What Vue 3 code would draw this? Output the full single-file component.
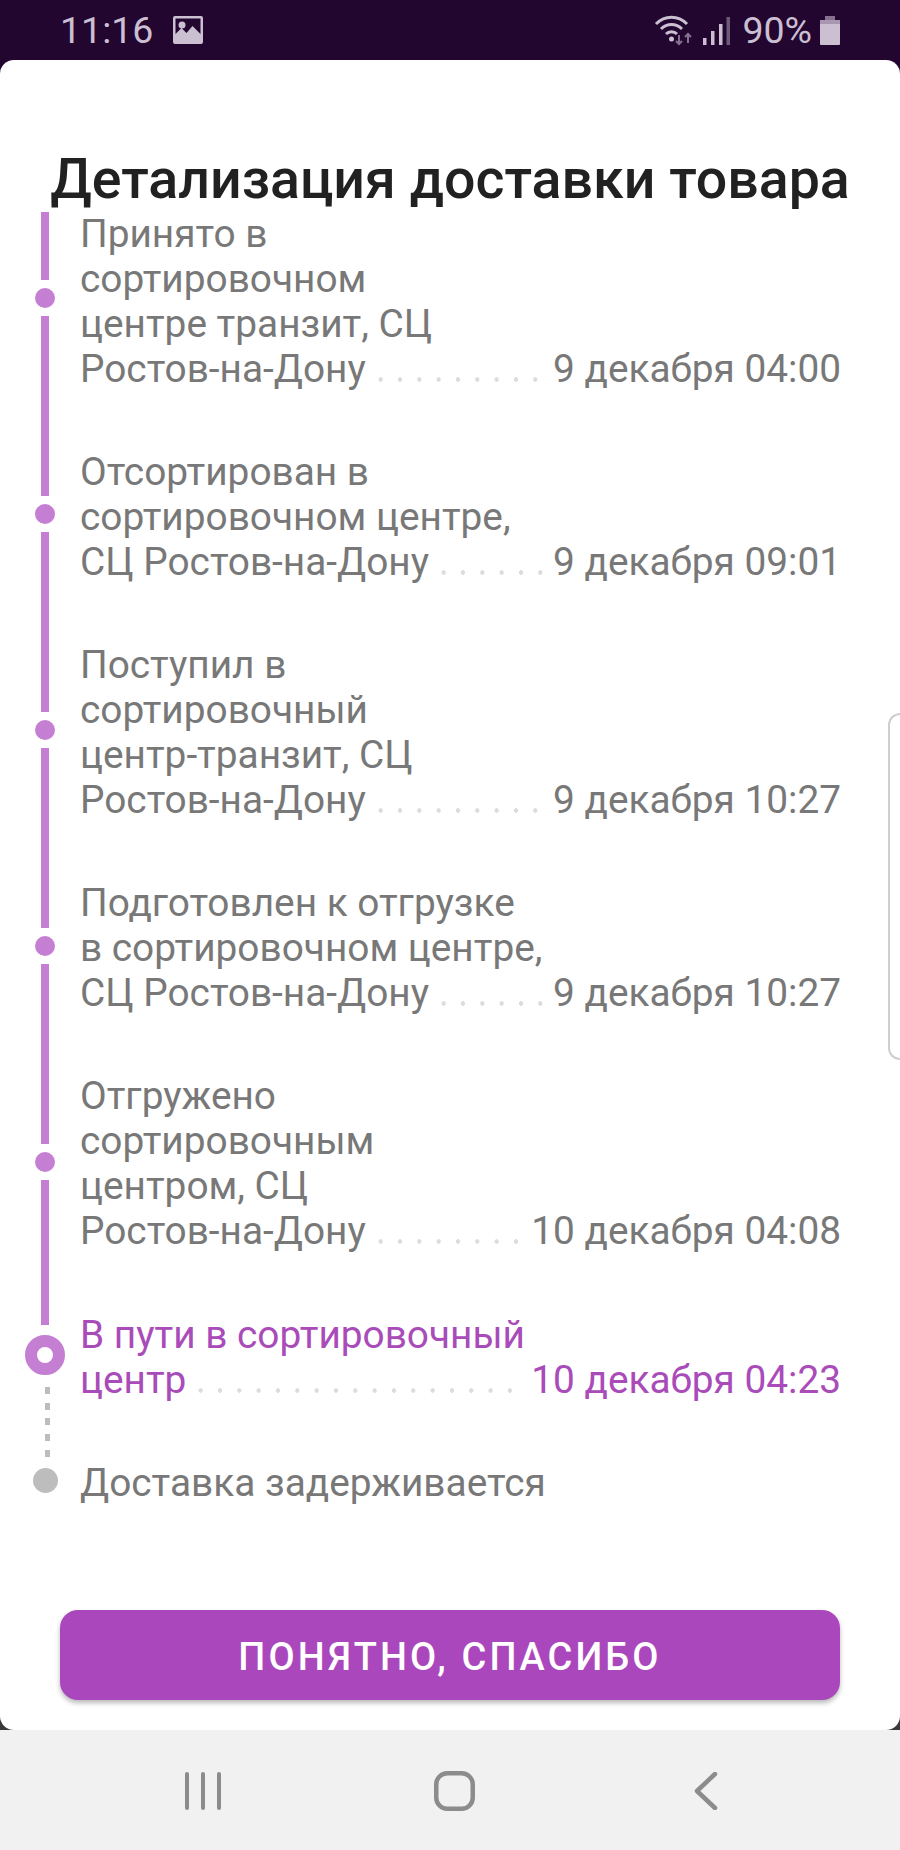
<script setup>
const rows = [
  { lines: ['Принято в', 'сортировочном', 'центре транзит, СЦ'], last: 'Ростов-на-Дону', date: '9 декабря 04:00' },
  { lines: ['Отсортирован в', 'сортировочном центре,'], last: 'СЦ Ростов-на-Дону', date: '9 декабря 09:01' },
  { lines: ['Поступил в', 'сортировочный', 'центр-транзит, СЦ'], last: 'Ростов-на-Дону', date: '9 декабря 10:27' },
  { lines: ['Подготовлен к отгрузке', 'в сортировочном центре,'], last: 'СЦ Ростов-на-Дону', date: '9 декабря 10:27' },
  { lines: ['Отгружено', 'сортировочным', 'центром, СЦ'], last: 'Ростов-на-Дону', date: '10 декабря 04:08' },
  { lines: ['В пути в сортировочный'], last: 'центр', date: '10 декабря 04:23', active: true },
]
const segments = [68, 180, 180, 180, 180]
</script>

<template>
  <div class="screen">
    <header class="status">
      <div class="status-left">
        <span class="status-text">11:16</span>
        <svg class="ico-image" width="30" height="28" viewBox="0 0 30 28">
          <path fill-rule="evenodd" fill="#cbbfd2" d="M2 0h26a2 2 0 0 1 2 2v24a2 2 0 0 1-2 2H2a2 2 0 0 1-2-2V2a2 2 0 0 1 2-2zM2.500 2.500V18l6-6 5 5 6-7 8 8V2.500z" />
          <circle cx="9" cy="9" r="3.500" fill="#cbbfd2" />
        </svg>
      </div>
      <div class="status-right">
        <svg width="40" height="32" viewBox="0 0 40 32" fill="none">
          <path d="M2 10C11 1 24 1 33 10" stroke="#cbbfd2" stroke-width="3" />
          <path d="M7 15C13 9 22 9 28 15" stroke="#cbbfd2" stroke-width="3" />
          <path d="M12 20C15 17 20 17 23 20" stroke="#cbbfd2" stroke-width="3" />
          <circle cx="17.500" cy="25" r="2.500" fill="#cbbfd2" />
          <path d="M25 21v9M22 27l3 3 3-3" stroke="#85708f" stroke-width="2" />
          <path d="M34 29v-9M31 23l3-3 3 3" stroke="#85708f" stroke-width="2" />
        </svg>
        <svg class="ico-signal" width="27" height="28" viewBox="0 0 27 28">
          <rect x="0" y="21" width="3.500" height="7" fill="#cbbfd2" />
          <rect x="8" y="14" width="3.500" height="14" fill="#cbbfd2" />
          <rect x="16" y="7" width="3.500" height="21" fill="#cbbfd2" />
          <rect x="23.500" y="0" width="3.500" height="28" fill="#6d5a78" />
        </svg>
        <span class="status-text pct">90%</span>
        <svg width="20" height="29" viewBox="0 0 20 29">
          <path d="M5 0h10v4H5z" fill="#85708f" />
          <path d="M0 4h20v4H0z" fill="#a797b0" />
          <path d="M0 8h20v20a1 1 0 0 1-1 1H1a1 1 0 0 1-1-1z" fill="#cbbfd2" />
        </svg>
      </div>
    </header>

    <main class="backdrop">
      <section class="sheet">
        <h1 class="title">Детализация доставки товара</h1>
        <div class="timeline">
          <div class="rail">
            <template v-for="(h, i) in segments" :key="i">
              <span class="seg" :style="{ height: h + 'px' }"></span>
              <span class="dot"></span>
            </template>
            <span class="seg seg-last"></span>
            <span class="ring"></span>
            <span class="dashes"></span>
            <span class="pending"></span>
          </div>
          <div class="rows">
            <div v-for="(r, i) in rows" :key="i" class="row" :class="{ active: r.active }">
              <div v-for="l in r.lines" :key="l" class="line">{{ l }}</div>
              <div class="line last">
                <span>{{ r.last }}</span>
                <span class="leader"></span>
                <span>{{ r.date }}</span>
              </div>
            </div>
            <div class="row"><div class="line">Доставка задерживается</div></div>
          </div>
        </div>
        <button class="cta"><span class="cta-label">ПОНЯТНО, СПАСИБО</span></button>
        <div class="handle"></div>
      </section>
    </main>

    <nav class="nav">
      <span class="slot">
        <svg width="36" height="38" viewBox="0 0 36 38" fill="none" stroke="#8c8c8c" stroke-width="4" stroke-linecap="round">
          <path d="M2 2v34M18 2v34M34 2v34" />
        </svg>
      </span>
      <span class="slot">
        <svg width="41" height="40" viewBox="0 0 41 40" fill="none" stroke="#8c8c8c" stroke-width="4.500">
          <rect x="2.250" y="2.250" width="36.500" height="35.500" rx="11" />
        </svg>
      </span>
      <span class="slot">
        <svg width="24" height="38" viewBox="0 0 24 38" fill="none" stroke="#8c8c8c" stroke-width="4.500" stroke-linecap="round" stroke-linejoin="round">
          <path d="M21 2L3 19l18 17" />
        </svg>
      </span>
    </nav>
  </div>
</template>

<style>
html, body { margin: 0; padding: 0; background: #fff; }
</style>

<style scoped>
.screen {
  width: 900px;
  height: 1850px;
  display: flex;
  flex-direction: column;
  overflow: hidden;
  font-family: Roboto, "Noto Sans", sans-serif;
}
.status {
  height: 60px;
  flex: none;
  background: #22062f;
  display: flex;
  justify-content: space-between;
  align-items: center;
  padding: 0 60px 0 60px;
  box-sizing: border-box;
  color: #cbbfd2;
}
.status-left, .status-right { display: flex; align-items: center; }
.status-text { font-size: 37.500px; line-height: 60px; }
.ico-image { margin-left: 20px; }
.ico-signal { margin-left: 9px; margin-top: 2px; }
.pct { margin: 0 8px 0 12px; }
.backdrop {
  flex: none;
  height: 1670px;
  background: linear-gradient(#22062f 50%, #3a3a3a 50%);
}
.sheet {
  position: relative;
  height: 100%;
  box-sizing: border-box;
  background: #fff;
  border-radius: 14px;
  display: flex;
  flex-direction: column;
  padding-top: 88px;
}
.title {
  margin: 0;
  height: 64px;
  font-size: 55.500px;
  line-height: 64px;
  font-weight: 500;
  color: #212121;
  text-align: center;
  white-space: nowrap;
}
.timeline {
  display: flex;
  padding: 0 59px 0 25px;
}
.rail {
  width: 40px;
  flex: none;
  display: flex;
  flex-direction: column;
  align-items: center;
  gap: 8px;
}
.seg { width: 8px; background: #c57fd2; display: block; }
.seg-last { height: 145px; }
.dot { width: 20px; height: 20px; border-radius: 50%; background: #c57fd2; display: block; }
.ring {
  width: 16px;
  height: 16px;
  border: 12px solid #c57fd2;
  border-radius: 50%;
  margin-top: 2px;
  background: #fff;
  display: block;
}
.dashes {
  width: 5px;
  height: 73px;
  margin: 4px 0 0 5px;
  background: repeating-linear-gradient(#bdbdbd 0 7px, transparent 7px 15.700px);
  display: block;
}
.pending { width: 25px; height: 25px; border-radius: 50%; background: #bdbdbd; display: block; }
.rows {
  flex: 1;
  min-width: 0;
  margin: -1.500px 0 0 15px;
  display: flex;
  flex-direction: column;
  gap: 58.100px;
}
.row { font-size: 38.800px; color: #787878; }
.row.active { color: #a94bb9; margin-top: 1px; }
.line { line-height: 45px; white-space: nowrap; }
.last { display: flex; }
.leader {
  flex: 1;
  margin: 0 9px 0 5px;
  background-image: radial-gradient(circle at center, #dcdcdc 2px, transparent 2.500px);
  background-size: 19.330px 5px;
  background-repeat: repeat-x;
  background-position: 0 31.500px;
}
.cta {
  margin: auto 60px 30px;
  height: 90px;
  border: 0;
  border-radius: 18px;
  background: #ab47bc;
  color: #fff;
  font-family: inherit;
  font-size: 38px;
  font-weight: 500;
  letter-spacing: 3.100px;
  box-shadow: 0 3px 5px rgba(0, 0, 0, 0.28);
  padding: 3px 0 0;
}
.handle {
  position: absolute;
  right: 0;
  top: 653px;
  width: 12px;
  height: 347px;
  box-sizing: border-box;
  border: 2px solid #cfcfcf;
  border-right: 0;
  border-radius: 12px 0 0 12px;
  background: #fff;
}
.nav {
  flex: none;
  height: 120px;
  box-sizing: border-box;
  background: #f1f1f1;
  display: flex;
  padding: 41px 0 0 77px;
}
.slot { width: 251.500px; height: 40px; display: flex; justify-content: center; align-items: center; }
</style>
